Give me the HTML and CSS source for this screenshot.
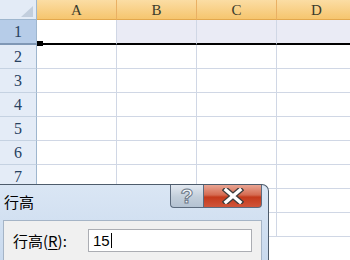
FILE: index.html
```html
<!DOCTYPE html>
<html lang="zh-CN">
<head>
  <meta charset="UTF-8">
  <title>行高</title>
  <link rel="stylesheet" href="styles.css">
</head>
<body>
  <div class="sheet">
    <div class="grid">
      <div class="corner"><span class="corner-tri"></span></div>
      <div class="col-head">A</div>
      <div class="col-head">B</div>
      <div class="col-head">C</div>
      <div class="col-head">D</div>

      <div class="row-head row-head-sel">1</div>
      <div class="cell sel active"></div>
      <div class="cell sel"></div>
      <div class="cell sel"></div>
      <div class="cell sel"></div>

      <div class="row-head">2</div><div class="cell"></div><div class="cell"></div><div class="cell"></div><div class="cell"></div>
      <div class="row-head">3</div><div class="cell"></div><div class="cell"></div><div class="cell"></div><div class="cell"></div>
      <div class="row-head">4</div><div class="cell"></div><div class="cell"></div><div class="cell"></div><div class="cell"></div>
      <div class="row-head">5</div><div class="cell"></div><div class="cell"></div><div class="cell"></div><div class="cell"></div>
      <div class="row-head">6</div><div class="cell"></div><div class="cell"></div><div class="cell"></div><div class="cell"></div>
      <div class="row-head">7</div><div class="cell"></div><div class="cell"></div><div class="cell"></div><div class="cell"></div>
      <!-- rows 8 and 9 sit under the dialog -->
      <div class="row-head"></div><div class="cell"></div><div class="cell"></div><div class="cell"></div><div class="cell"></div>
      <div class="row-head"></div><div class="cell"></div><div class="cell"></div><div class="cell"></div><div class="cell"></div>
    </div>
    <span class="fill-handle"></span>
  </div>

  <div class="dialog">
    <div class="dialog-title">
      <span class="title-text">行高</span>
      <div class="title-buttons">
        <button class="btn-help">?</button>
        <button class="btn-close">
          <svg width="22" height="16" viewBox="0 0 22 16">
            <path d="M4 2 L18 14 M18 2 L4 14" stroke="#3d3d3d" stroke-width="6" stroke-linecap="square"/>
            <path d="M4 2 L18 14 M18 2 L4 14" stroke="#fff" stroke-width="3.4" stroke-linecap="square"/>
          </svg>
        </button>
      </div>
    </div>
    <div class="dialog-body">
      <label class="field-label">行高(<u>R</u>):</label>
      <div class="field-input">15<span class="caret"></span></div>
    </div>
  </div>
</body>
</html>
```
FILE: styles.css
```css
body {
  margin: 0;
  width: 350px;
  height: 260px;
  overflow: hidden;
  background: #fff;
  position: relative;
}

.sheet {
  position: relative;
}

.grid {
  display: grid;
  grid-template-columns: 37px repeat(4, 80px);
  grid-template-rows: 20px 25px;
  grid-auto-rows: 24px;
}

.grid > div {
  box-sizing: border-box;
}

.corner {
  position: relative;
  background: #e3ebf6;
  border-right: 1px solid #9eb6ce;
  border-bottom: 1px solid #9eb6ce;
}

.corner-tri {
  position: absolute;
  right: 3px;
  bottom: 2px;
  width: 0;
  height: 0;
  border-left: 12px solid transparent;
  border-bottom: 11px solid #c2cedd;
}

.col-head {
  display: flex;
  align-items: center;
  justify-content: center;
  background: linear-gradient(#fbdda4, #f6c56e);
  border-right: 1px solid #e9b064;
  border-bottom: 1px solid #e3a84d;
  color: #3b3b2c;
  font-family: "Liberation Serif", serif;
  font-size: 15px;
  padding-top: 1px;
}

.row-head {
  display: flex;
  align-items: center;
  justify-content: center;
  background: #e4ecf7;
  border-right: 1px solid #9eb6ce;
  border-bottom: 1px solid #c5d2e2;
  color: #27415f;
  font-family: "Liberation Serif", serif;
  font-size: 16px;
  padding-top: 1px;
}

.row-head-sel {
  background: #b6cce8;
  border-bottom: 2px solid #7f97b5;
}

.cell {
  border-right: 1px solid #d0d7e5;
  border-bottom: 1px solid #d0d7e5;
}

.cell.sel {
  background: #eaebf5;
  border-bottom: 2px solid #000;
}

.cell.sel.active {
  background: #fff;
}

.fill-handle {
  position: absolute;
  left: 37px;
  top: 41px;
  width: 6px;
  height: 5px;
  background: #000;
}

/* dialog */
.dialog {
  position: absolute;
  left: -10px;
  top: 184px;
  width: 277px;
  height: 80px;
  background: linear-gradient(#dae6f4, #c8d9ee);
  border: 1px solid #4d5b6b;
  border-bottom: none;
  border-radius: 0 7px 0 0;
  font-family: "Noto Sans CJK SC", sans-serif;
}

.dialog-title {
  display: flex;
  justify-content: space-between;
  height: 34px;
}

.title-text {
  padding: 8px 0 0 13px;
  font-size: 15px;
  line-height: 18px;
  color: #000;
}

.title-buttons {
  display: flex;
  margin-right: 6px;
}

.btn-help,
.btn-close {
  width: 33px;
  height: 23px;
  margin: 0;
  padding: 0;
  border: 1px solid #5c6b7e;
  border-top: none;
}

.btn-help {
  background: linear-gradient(#e3e9f1, #c2ceda 55%, #b4c2d2);
  border-right: none;
  border-radius: 0 0 0 4px;
  color: #f4f6f9;
  font-family: "Liberation Sans", sans-serif;
  font-weight: bold;
  font-size: 21px;
  line-height: 22px;
  -webkit-text-stroke: 1px #6a7787;
}

.btn-close {
  width: 59px;
  display: flex;
  align-items: center;
  justify-content: center;
  background: linear-gradient(#e9a593, #d56b52 45%, #c43a1c 55%, #d0553a);
  border-radius: 0 0 4px 0;
}

.dialog-body {
  margin: 1px 6px 0 12px;
  height: 46px;
  background: #f0f0f0;
  border: 1px solid #a5b4c6;
  border-bottom: none;
  display: flex;
  align-items: flex-start;
  padding-top: 8px;
  box-sizing: border-box;
}

.field-label {
  margin: 3px 0 0 9px;
  width: 75px;
  font-size: 15px;
  line-height: 18px;
  color: #000;
}

.field-label u {
  text-underline-offset: 2px;
}

.field-input {
  display: flex;
  align-items: center;
  width: 164px;
  height: 23px;
  box-sizing: border-box;
  background: #fff;
  border: 1px solid #abadb3;
  padding-left: 4px;
  font-family: "Liberation Sans", sans-serif;
  font-size: 15px;
  color: #000;
}

.caret {
  width: 1px;
  height: 15px;
  background: #000;
  margin-left: 1px;
}
```
